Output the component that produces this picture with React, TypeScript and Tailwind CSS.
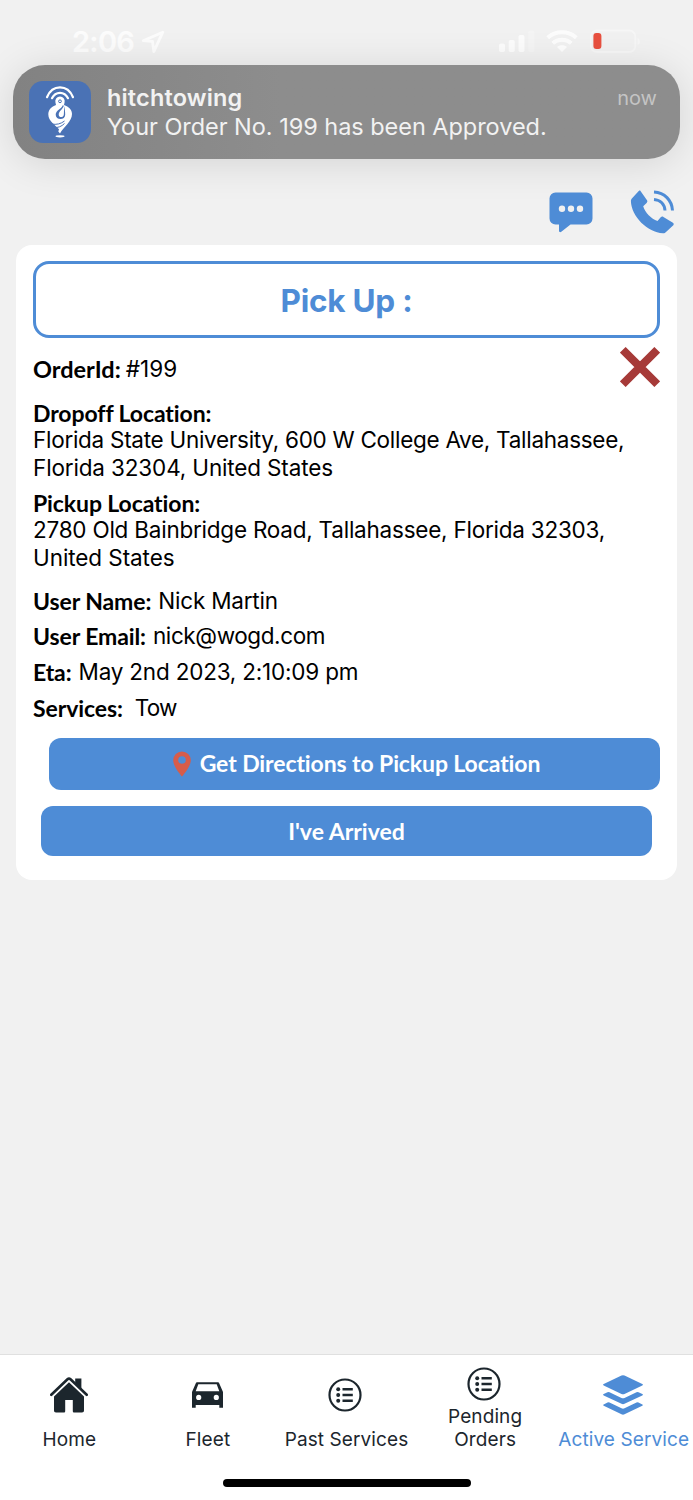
import type { ReactNode } from "react";

const HitchLogo = () => (
  <div className="h-[62px] w-[62px] shrink-0 overflow-hidden rounded-[14px] bg-[#4a72b5]">
    <svg viewBox="0 0 62 62" className="h-full w-full" fill="none">
      <path d="M18 16.200C23.500 3.200 38.500 3.200 44 16.200" stroke="#fff" strokeWidth="2.200" strokeLinecap="round" />
      <path d="M23 17.200C26.500 10 35.500 10 39 17.200" stroke="#fff" strokeWidth="2.200" strokeLinecap="round" />
      <path
        d="M31 15.500a4.700 4.700 0 0 0-4.600 5.800l.6 2.700C22.500 25.500 19.300 29 19.300 33.300c0 3.500 1.700 6.200 4.200 8.700l6.500 6.200-.7 2.300 1.700 2c3.500-6.500 12-12 12-19.500 0-4.200-3.200-7.500-8-9l.6-2.700a4.700 4.700 0 0 0-4.600-5.800z"
        fill="#fff"
      />
      <circle cx="31" cy="20.300" r="1.400" stroke="#4a72b5" strokeWidth="1" />
      <path d="M33.500 24.500c-.2 3-6.800 4.500-6.800 9.300 0 2.600 2.200 4.300 4.800 4.300s4.700-1.700 4.700-4.300c0-3.500-.4-6.300-1.400-9.300z" fill="#4a72b5" />
      <path d="M35 23.500c0 4-5.300 6.500-5.300 10 0 3.400 4.700 3.400 5.100.2.300-3 .2-6.200.2-10.200z" fill="#fff" />
      <path d="M22.500 43c5 1 9.500-.2 13-3M25 46.500c4 .4 7.500-1 10.500-4" stroke="#4a72b5" strokeWidth="1" />
      <ellipse cx="31" cy="55.300" rx="4.500" ry="1.100" fill="#fff" />
    </svg>
  </div>
);

const StatusBar = () => (
  <div className="flex h-[65px] items-start justify-between pl-[72px] pr-[53px] pt-[28px]">
    <div className="flex items-center gap-[7px] text-white/80">
      <span className="text-[29px] font-semibold leading-[28px] tracking-[-0.7px]">2:06</span>
      <svg viewBox="0 0 24 24" className="h-[24px] w-[24px]" fill="none" stroke="currentColor" strokeWidth="2.800" strokeLinejoin="round">
        <path d="M21.800 2.200 2.200 10.700l9.300.7 1.300 10.200z" />
      </svg>
    </div>
    <svg viewBox="0 0 141 24" className="mt-px h-[24px] w-[141px]" fill="#fff">
      <rect x="0" y="14.500" width="6" height="8.500" rx="1.800" opacity=".8" />
      <rect x="9.700" y="11" width="6" height="12" rx="1.800" opacity=".8" />
      <rect x="19.500" y="6" width="6" height="17" rx="1.800" opacity=".8" />
      <rect x="29.300" y="1.500" width="6" height="21.500" rx="1.800" opacity=".25" />
      <g fill="none" stroke="#fff" strokeWidth="4" opacity=".85">
        <path d="M48.700 8.700c8-7.300 20.600-7.300 28.600 0" />
        <path d="M53.700 14.200c5.300-4.700 13.300-4.700 18.600 0" />
      </g>
      <path d="M63 23l-5-5c2.700-2.300 7.300-2.300 10 0z" opacity=".85" />
      <rect x="91.800" y="1.500" width="44.500" height="21.500" rx="6" fill="none" stroke="#fff" strokeWidth="1.800" opacity=".35" />
      <path d="M138.500 9c3.300 1 3.300 6 0 7z" opacity=".35" />
      <rect x="94.400" y="4" width="8" height="16" rx="3" fill="#e8503f" />
    </svg>
  </div>
);

const Notification = () => (
  <div className="mx-[13px] flex h-[94px] items-start rounded-[32px] bg-linear-to-r from-[#828282] to-[#8d8d8d] to-40% pl-[16px] pr-[23px] pt-[16px] shadow-[0_4px_40px_0px_rgba(0,0,0,0.12)]">
    <HitchLogo />
    <div className="ml-[16px] flex-1 whitespace-nowrap text-[#f2f2f2]">
      <div className="flex h-[33px] items-center justify-between">
        <span className="text-[23.500px] font-semibold leading-[33px] tracking-[0.150px]">hitchtowing</span>
        <span className="mt-[2px] text-[20px] leading-[33px] text-[#c4c4c4]">now</span>
      </div>
      <p className="text-[23.500px] leading-[26px] tracking-[-0.04px]">Your Order No. 199 has been Approved.</p>
    </div>
  </div>
);

const ContactActions = () => (
  <div className="flex h-[86px] items-start justify-end gap-[37px] pr-[19px] pt-[31px] text-[#4e8cd6]">
    <svg viewBox="0 0 44 42" className="mt-[2px] h-[42px] w-[44px]" fill="currentColor">
      <path d="M6.500.500h31a6 6 0 0 1 6 6v20a6 6 0 0 1-6 6H21.500l-9.200 7.300c-1.200.9-2.300.3-2.300-1v-6.300H6.500a6 6 0 0 1-6-6v-20a6 6 0 0 1 6-6z" />
      <g fill="#f0f0f0">
        <circle cx="13" cy="16.700" r="3.200" />
        <circle cx="22" cy="16.700" r="3.200" />
        <circle cx="31" cy="16.700" r="3.200" />
      </g>
    </svg>
    <svg viewBox="0 0 44 44" className="h-[44px] w-[44px]" fill="currentColor">
      <path d="M10.500.900 17 10.200c.7 1 .3 2-.4 2.700l-3.400 3.300c2 6.400 7.900 12.600 14.300 14.800l3.200-3.700c.7-.7 1.700-1 2.700-.4l9.500 5.800c1 .6 1 1.700.4 2.600L36 42c-.8 1-1.900 1.300-3.100 1.200C17.600 42.400 1.300 26.600.900 11c0-1.300.4-2.200 1.400-3.100L9 .800c.6-.5 1.100-.5 1.500.1z" />
      <g fill="none" stroke="currentColor" strokeWidth="3">
        <path d="M24 2c10.500.5 18 8.300 18.500 18.500" />
        <path d="M24 9.500c6.500.5 10.500 4.800 11 11" />
      </g>
    </svg>
  </div>
);

const Label = ({ children, className = "text-[23px] tracking-[-0.100px]" }: { children: ReactNode; className?: string }) => (
  <span className={`font-[Lato,sans-serif] font-bold [font-variant-ligatures:none] ${className}`}>{children}</span>
);

const Row = ({ label, children }: { label: string; children: ReactNode }) => (
  <div className="flex h-[35.600px] items-center gap-[7px] whitespace-nowrap">
    <Label>{label}</Label>
    <span className="-mt-[2px] text-[22.500px] tracking-[-0.200px]">{children}</span>
  </div>
);

const OrderCard = () => (
  <div className="relative mx-[16px] h-[635px] rounded-[16px] bg-white px-[17px] pt-[16px] leading-[27px] text-black">
    <div className="flex h-[77px] items-center justify-center rounded-[16px] border-[3px] border-[#4e8cd6] pt-px text-[31.500px] font-bold tracking-[-0.250px] text-[#4e8cd6]">
      Pick Up :
    </div>
    <div className="flex h-[61.500px] items-start justify-between">
      <div className="mt-[17.500px] flex items-center gap-[5px]">
        <Label className="text-[23.500px]">OrderId:</Label>
        <span className="-mt-[2px] text-[22.500px] tracking-[0.100px]">#199</span>
      </div>
      <svg viewBox="0 0 40 40" className="mt-[9px] h-[40px] w-[40px]" stroke="#a63a38" strokeWidth="8">
        <path d="M2.800 2.800l34.400 34.400M37.200 2.800 2.800 37.200" />
      </svg>
    </div>
    <div className="h-[26.500px]">
      <Label>Dropoff Location:</Label>
    </div>
    <p className="whitespace-nowrap text-[22.500px] leading-[27.500px] tracking-[-0.280px]">
      Florida State University, 600 W College Ave, Tallahassee,
      <br />
      <span className="tracking-[-0.150px]">Florida 32304, United States</span>
    </p>
    <div className="mt-[8.500px] h-[26.500px]">
      <Label>Pickup Location:</Label>
    </div>
    <p className="mb-[12.500px] whitespace-nowrap text-[22.500px] leading-[27.500px] tracking-[-0.230px]">
      2780 Old Bainbridge Road, Tallahassee, Florida 32303,
      <br />
      <span className="tracking-[-0.080px]">United States</span>
    </p>
    <Row label="User Name:">Nick Martin</Row>
    <Row label="User Email:">
      <span className="tracking-[-0.400px]">nick@wogd.com</span>
    </Row>
    <Row label="Eta:">May 2nd 2023, 2:10:09 pm</Row>
    <Row label="Services:">
      <span className="ml-[5px] tracking-[-0.800px]">Tow</span>
    </Row>
    <button className="ml-[16px] mt-[12px] flex h-[52px] w-[611px] items-center justify-center gap-[9px] rounded-[12px] bg-[#4e8cd6] pl-[4px] text-white">
      <svg viewBox="0 0 18 26" className="h-[26px] w-[18px]" fill="#d65c4a">
        <path fillRule="evenodd" d="M9 .500a8.800 8.800 0 0 0-8.800 8.800C.200 16 9 25.500 9 25.500S17.800 16 17.800 9.300A8.800 8.800 0 0 0 9 .500zm0 4.700a3.800 3.800 0 1 1 0 7.600 3.800 3.800 0 0 1 0-7.600z" />
      </svg>
      <Label>Get Directions to Pickup Location</Label>
    </button>
    <button className="ml-[8px] mt-[16px] flex h-[50px] w-[611px] items-center justify-center rounded-[12px] bg-[#4e8cd6] pt-px text-white">
      <Label className="text-[23px]">I've Arrived</Label>
    </button>
  </div>
);

const HomeIcon = () => (
  <svg viewBox="0 0 38 36" className="h-[36px] w-[38px]" fill="currentColor">
    <path d="M19 5.300 4 19.500V33.500c0 1.300.7 2 2 2h7.700c1 0 1.500-.5 1.500-1.500V23h7.600v11c0 1 .5 1.500 1.500 1.500H32c1.300 0 2-.7 2-2v-14z" />
    <path d="M1.300 17.800 17.500 2.300q1.500-1.400 3 0L36.700 17.800" fill="none" stroke="#fff" strokeWidth="4.500" />
    <path d="M25.200 1.500h6.200v10.500l-6.200-6z" />
    <path d="M1.300 17.800 17.500 2.300q1.500-1.400 3 0L36.700 17.800" fill="none" stroke="currentColor" strokeWidth="2.600" strokeLinecap="round" />
  </svg>
);

const CarIcon = () => (
  <svg viewBox="0 0 31 26" className="h-[26px] w-[31px]" fill="currentColor">
    <path
      fillRule="evenodd"
      d="M5.500.200h20c1 0 1.500.5 1.800 1.300L31 10v15.700h-3.700v-2.600H3.700v2.600H0V10L3.700 1.500C4 .700 4.500.200 5.500.200zM6.300 2.300 3.700 9.200h23.600l-2.600-6.900zM6.700 12.800a2.600 2.600 0 1 0 0 5.200 2.600 2.600 0 0 0 0-5.200zm17.600 0a2.600 2.600 0 1 0 0 5.200 2.600 2.600 0 0 0 0-5.200z"
    />
  </svg>
);

const ListIcon = () => (
  <svg viewBox="0 0 34 34" className="mr-[3px] h-[34px] w-[34px]" fill="currentColor">
    <circle cx="17" cy="17" r="15.500" fill="none" stroke="currentColor" strokeWidth="2.200" />
    <path d="M14.500 11.200h10.300M14.500 17h10.300M14.500 22.700h10.300" stroke="currentColor" strokeWidth="2.500" />
    <circle cx="10.200" cy="11.200" r="2" />
    <circle cx="10.200" cy="17" r="2" />
    <circle cx="10.200" cy="22.700" r="2" />
  </svg>
);

const LayersIcon = () => (
  <svg viewBox="0 0 40 40" className="mr-px h-[40px] w-[40px]" fill="currentColor">
    <path d="M18.500.600q1.500-.7 3 0L39.300 9q1.200.7 0 1.400L21.500 18.900q-1.500.7-3 0L.700 10.400Q-.500 9.700.700 9z" />
    <path d="M.700 19 4.500 17.200q1-.5 2 0l12 5.700q1.500.7 3 0l12-5.700q1-.5 2 0L39.300 19q1.200.7 0 1.400L21.500 28.800q-1.500.7-3 0L.700 20.400Q-.500 19.700.700 19z" />
    <path d="M.700 29.400 4.500 27.600q1-.5 2 0l12 5.700q1.500.7 3 0l12-5.700q1-.5 2 0l3.800 1.800q1.200.7 0 1.400L21.500 39.300q-1.500.7-3 0L.700 30.800Q-.500 30.100.700 29.400z" />
  </svg>
);

const tabs = [
  { label: "Home", icon: <HomeIcon />, className: "pt-[22px]" },
  { label: "Fleet", icon: <CarIcon />, className: "pt-[27px]" },
  { label: "Past Services", icon: <ListIcon />, className: "pt-[23px]" },
  { label: "Pending Orders", icon: <ListIcon />, className: "pt-[12px]" },
  { label: "Active Service", icon: <LayersIcon />, className: "pt-[20px] text-[#4e8cd6]" },
];

const TabBar = () => (
  <nav className="mt-auto h-[146px] border-t border-[#e0e0e0] bg-white text-[#1c262d]">
    <div className="grid h-[96.500px] grid-cols-5">
      {tabs.map((tab) => (
        <div key={tab.label} className={`flex flex-col items-center justify-between ${tab.className}`}>
          {tab.icon}
          <span
            className={`text-center text-[19px] leading-[23.500px] tracking-[0.100px] ${
              tab.label === "Pending Orders" ? "w-[90px]" : "whitespace-nowrap"
            }`}
          >
            {tab.label}
          </span>
        </div>
      ))}
    </div>
    <div className="mx-auto mt-[27.500px] h-[8px] w-[248px] rounded-full bg-black" />
  </nav>
);

const App = () => {
  return (
    <div className="flex h-[1500px] w-[693px] flex-col overflow-hidden bg-[#f1f1f1] font-[Inter,sans-serif]">
      <StatusBar />
      <Notification />
      <ContactActions />
      <OrderCard />
      <TabBar />
    </div>
  );
};

export default App;
